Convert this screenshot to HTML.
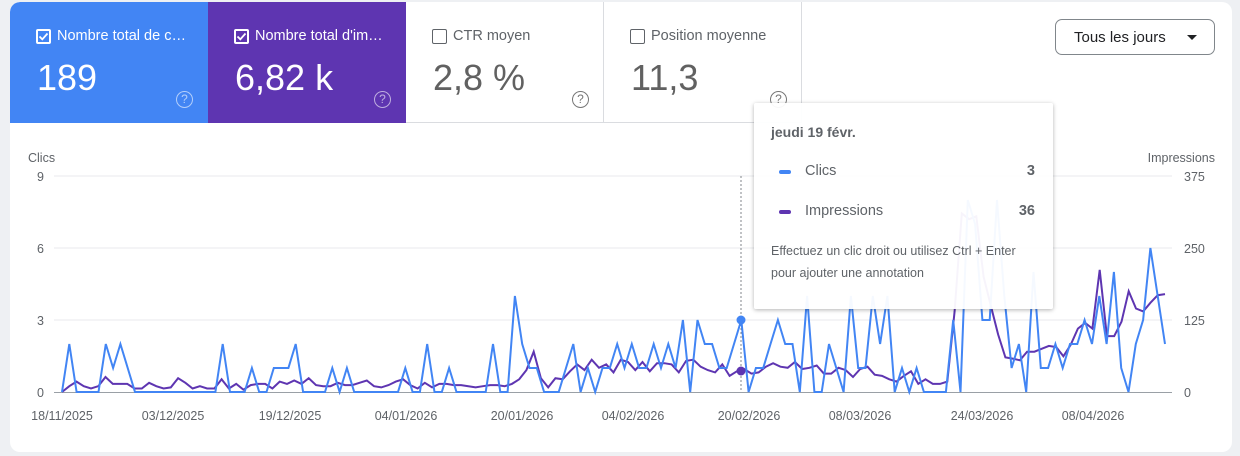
<!DOCTYPE html>
<html><head><meta charset="utf-8">
<style>
*{box-sizing:border-box;margin:0;padding:0}
body{width:1240px;height:456px;background:#eef0f3;font-family:"Liberation Sans",sans-serif;position:relative;overflow:hidden}
.card{position:absolute;left:10px;top:2px;width:1222px;height:450px;background:#fff;border-radius:10px;overflow:hidden}
.tile{position:absolute;top:0;height:121px;width:198px}
.t1{left:0;background:#4285f4;color:#fff;border-top-left-radius:10px}
.t2{left:198px;background:#5e35b1;color:#fff}
.t3{left:396px;border-right:1px solid #dadce0;border-bottom:1px solid #dadce0;color:#5f6368}
.t4{left:594px;border-right:1px solid #dadce0;border-bottom:1px solid #dadce0;color:#5f6368}
.cb{position:absolute;left:26px;top:27px;width:15px;height:15px;border:2px solid currentColor;border-radius:2px}
.cb svg{position:absolute;left:0;top:0}
.lab{position:absolute;left:47px;top:26px;font-size:14.5px;white-space:nowrap}
.num{position:absolute;left:27px;top:55px;font-size:36px}
.t3 .num,.t4 .num{color:#616161}
.help{position:absolute;left:166px;top:89px;width:17px;height:17px;border:1.5px solid currentColor;border-radius:50%;font-size:12px;text-align:center;line-height:14px;opacity:.6}
.t3 .help,.t4 .help{opacity:1;color:#777}
.dd{position:absolute;left:1045px;top:17px;width:160px;height:36px;border:1px solid #80868b;border-radius:7px;font-size:15px;color:#202124;padding:9px 0 0 18px}
.dd:after{content:"";position:absolute;right:17px;top:15px;border:5px solid transparent;border-top:5px solid #202124}
.tt{position:absolute;left:754px;top:103px;width:299px;height:206px;background:rgba(255,255,255,.95);box-shadow:0 1px 4px rgba(0,0,0,.3);border-radius:2px;color:#5f6368}
</style></head><body>
<div class="card">
 <div class="tile t1"><div class="cb"><svg width="11" height="11" viewBox="0 0 11 11"><path d="M1.5 5.5l2.8 2.8L9.5 2.5" stroke="#fff" stroke-width="1.8" fill="none"/></svg></div><div class="lab">Nombre total de c…</div><div class="num">189</div><div class="help">?</div></div>
 <div class="tile t2"><div class="cb"><svg width="11" height="11" viewBox="0 0 11 11"><path d="M1.5 5.5l2.8 2.8L9.5 2.5" stroke="#fff" stroke-width="1.8" fill="none"/></svg></div><div class="lab">Nombre total d'im…</div><div class="num">6,82 k</div><div class="help">?</div></div>
 <div class="tile t3"><div class="cb" style="color:#5f6368;border-width:1.5px"></div><div class="lab">CTR moyen</div><div class="num">2,8 %</div><div class="help">?</div></div>
 <div class="tile t4"><div class="cb" style="color:#5f6368;border-width:1.5px"></div><div class="lab">Position moyenne</div><div class="num">11,3</div><div class="help">?</div></div>
 <div class="dd">Tous les jours</div>
</div>
<svg id="ch" width="1240" height="456" style="position:absolute;left:0;top:0" font-family="Liberation Sans, sans-serif" font-size="12.5" fill="#5f6368">
 <text x="28" y="162">Clics</text>
 <text x="1215" y="162" text-anchor="end">Impressions</text>
 <g stroke="#e8eaed" stroke-width="1">
  <line x1="54" y1="176" x2="1172" y2="176"/><line x1="54" y1="248" x2="1172" y2="248"/><line x1="54" y1="320" x2="1172" y2="320"/>
 </g>
 <line x1="54" y1="392.5" x2="1172" y2="392.5" stroke="#9aa0a6"/>
 <g text-anchor="end"><text x="44" y="181">9</text><text x="44" y="253">6</text><text x="44" y="325">3</text><text x="44" y="397">0</text></g>
 <g><text x="1184" y="181">375</text><text x="1184" y="253">250</text><text x="1184" y="325">125</text><text x="1184" y="397">0</text></g>
 <g text-anchor="middle">
  <text x="62" y="420">18/11/2025</text><text x="173" y="420">03/12/2025</text><text x="290" y="420">19/12/2025</text><text x="406" y="420">04/01/2026</text><text x="522" y="420">20/01/2026</text><text x="633" y="420">04/02/2026</text><text x="749" y="420">20/02/2026</text><text x="860" y="420">08/03/2026</text><text x="982" y="420">24/03/2026</text><text x="1093" y="420">08/04/2026</text>
 </g>
 <line x1="741" y1="176" x2="741" y2="392" stroke="#80868b" stroke-dasharray="2,2"/>
 <polyline id="pi" fill="none" stroke="#5e35b1" stroke-width="2"/>
 <polyline id="pc" fill="none" stroke="#4285f4" stroke-width="2"/>
 <circle cx="741" cy="320" r="4.5" fill="#4285f4"/>
 <circle cx="741" cy="371" r="4.5" fill="#5e35b1"/>
</svg>
<div class="tt">
 <div style="position:absolute;left:17px;top:21px;font-size:14px;font-weight:bold;color:#5f6368">jeudi 19 févr.</div>
 <div style="position:absolute;left:25px;top:67px;width:12px;height:4px;border-radius:2px;background:#4285f4"></div>
 <div style="position:absolute;left:51px;top:60px;font-size:14.5px">Clics</div>
 <div style="position:absolute;right:18px;top:60px;font-size:14.5px;font-weight:bold">3</div>
 <div style="position:absolute;left:25px;top:107px;width:12px;height:4px;border-radius:2px;background:#5e35b1"></div>
 <div style="position:absolute;left:51px;top:100px;font-size:14.5px">Impressions</div>
 <div style="position:absolute;right:18px;top:100px;font-size:14.5px;font-weight:bold">36</div>
 <div style="position:absolute;left:17px;top:137px;font-size:12.5px;line-height:22px;width:268px">Effectuez un clic droit ou utilisez Ctrl + Enter pour ajouter une annotation</div>
</div>
<script>
var c=[0,2,0,0,0,0,2,1,2,1,0,0,0,0,0,0,0,0,0,0,0,0,2,0,0,0,1,0,0,1,1,1,2,0,0,0,0,1,0,1,0,0,0,0,0,0,0,1,0,0,2,0,0,1,0,0,0,0,0,2,0,0,4,2,1,1,0,0,0,1,2,0,1,0,1,1,2,1,2,1,1,2,1,2,1,3,0,3,2,2,1,1,2,3,0,1,1,2,3,2,2,0,4,0,0,2,1,0,4,1,1,4,2,4,0,1,0,1,0,0,0,0,3,0,8,7,3,3,8,4,1,2,0,5,1,1,2,1,2,2,3,2,4,2,5,1,0,2,3,6,4,2];
var im=[0,10,18,10,6,10,26,14,14,14,6,6,16,10,6,8,24,16,6,10,6,6,22,6,14,4,12,14,14,6,18,14,20,14,24,12,10,10,16,12,12,16,20,10,8,12,18,22,12,6,16,8,14,14,12,12,10,8,10,12,12,10,14,22,38,70,24,8,24,22,36,48,38,56,42,48,34,56,52,38,52,36,50,50,48,34,54,56,44,38,34,48,28,36,40,32,34,44,50,44,42,52,40,42,46,32,32,42,38,26,40,44,30,28,22,18,28,36,14,22,14,14,18,140,310,300,305,200,150,100,60,58,55,70,70,75,80,78,62,82,110,120,110,212,97,97,122,175,145,140,155,168,170];
function pts(a,f){var n=a.length,s=(1165-62)/(n-1),o=[];for(var i=0;i<n;i++)o.push((62+i*s).toFixed(1)+","+f(a[i]).toFixed(1));return o.join(" ");}
document.getElementById("pc").setAttribute("points",pts(c,function(v){return 392-v*24}));
document.getElementById("pi").setAttribute("points",pts(im,function(v){return 392-v*0.576}));
</script>
</body></html>
